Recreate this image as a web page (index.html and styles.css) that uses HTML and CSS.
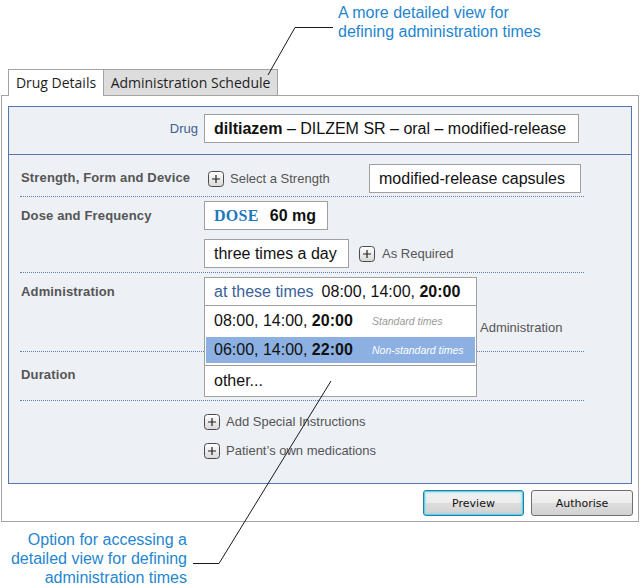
FILE: index.html
```html
<!DOCTYPE html>
<html>
<head>
<meta charset="utf-8">
<link rel="stylesheet" href="styles.css">
</head>
<body>
<div class="note note-top">A more detailed view for<br>defining administration times</div>

<div class="tabs">
  <div class="tab tab-active">Drug Details</div>
  <div class="tab tab-idle">Administration Schedule</div>
</div>

<div class="frame">
  <div class="panel">
    <div class="drug-row">
      <div class="drug-label">Drug</div>
      <div class="box drug-box"><b>diltiazem</b> – DILZEM SR – oral – modified-release</div>
    </div>

    <div class="rows">
      <div class="row row-strength">
        <div class="label">Strength, Form and Device</div>
        <div class="value">
          <span class="link link-strength"><svg class="plus" viewBox="0 0 16 16"><defs><linearGradient id="pg" x1="0" y1="0" x2="0" y2="1"><stop offset="0" stop-color="#ffffff"/><stop offset="1" stop-color="#d8d8d8"/></linearGradient></defs><rect x="0.5" y="0.5" width="15" height="15" rx="3" fill="url(#pg)" stroke="#4a4a4a"/><path d="M4 8H12M8 4V12" stroke="#222" stroke-width="1.2"/></svg>Select a Strength</span>
          <div class="box form-box">modified-release capsules</div>
        </div>
      </div>

      <div class="row row-dose">
        <div class="label">Dose and Frequency</div>
        <div class="value value-col">
          <div class="box dose-box"><span class="dose-word">DOSE</span><b>60 mg</b></div>
          <div class="freq-line">
            <div class="box freq-box">three times a day</div>
            <span class="link link-req"><svg class="plus" viewBox="0 0 16 16"><rect x="0.5" y="0.5" width="15" height="15" rx="3" fill="url(#pg)" stroke="#4a4a4a"/><path d="M4 8H12M8 4V12" stroke="#222" stroke-width="1.2"/></svg>As Required</span>
          </div>
        </div>
      </div>

      <div class="row row-admin">
        <div class="label">Administration</div>
        <div class="value value-col admin-value">
          <div class="box select-box"><span class="sel-mode">at these times</span>08:00, 14:00, <b>20:00</b></div>
          <div class="admin-extra">Administration</div>
          <div class="dropdown">
            <div class="opt"><span class="opt-times">08:00, 14:00, <b>20:00</b></span><span class="opt-note">Standard times</span></div>
            <div class="opt opt-hi"><span class="opt-times">06:00, 14:00, <b>22:00</b></span><span class="opt-note">Non-standard times</span></div>
            <div class="opt-sep"></div>
            <div class="opt opt-other">other...</div>
          </div>
        </div>
      </div>

      <div class="row row-duration">
        <div class="label">Duration</div>
        <div class="value"></div>
      </div>
    </div>

    <div class="extras">
      <span class="link"><svg class="plus" viewBox="0 0 16 16"><rect x="0.5" y="0.5" width="15" height="15" rx="3" fill="url(#pg)" stroke="#4a4a4a"/><path d="M4 8H12M8 4V12" stroke="#222" stroke-width="1.2"/></svg>Add Special Instructions</span>
      <span class="link"><svg class="plus" viewBox="0 0 16 16"><rect x="0.5" y="0.5" width="15" height="15" rx="3" fill="url(#pg)" stroke="#4a4a4a"/><path d="M4 8H12M8 4V12" stroke="#222" stroke-width="1.2"/></svg>Patient’s own medications</span>
    </div>
  </div>

  <div class="buttons">
    <button class="btn btn-default">Preview</button>
    <button class="btn">Authorise</button>
  </div>
</div>

<div class="note note-bottom">Option for accessing a<br>detailed view for defining<br>administration times</div>

<svg class="callouts" viewBox="0 0 640 588" width="640" height="588">
  <polyline points="333,27.5 295,27.5 268,75" fill="none" stroke="#1a1a1a" stroke-width="1"/>
  <polyline points="193,563.5 219,563.5 331,381" fill="none" stroke="#1a1a1a" stroke-width="1"/>
</svg>
</body>
</html>
```

FILE: styles.css
```css
html, body {
  margin: 0;
  padding: 0;
}
body {
  width: 640px;
  height: 588px;
  position: relative;
  overflow: hidden;
  background: #ffffff;
  font-family: "Liberation Sans", Arial, sans-serif;
  color: #111;
}

.note {
  color: #1f86cf;
  font-size: 16px;
  line-height: 19px;
}
.note-top {
  height: 69px;
  box-sizing: border-box;
  padding: 3px 0 0 338px;
}
.note-bottom {
  width: 187px;
  text-align: right;
  margin-top: 8px;
}

/* tabs */
.tabs {
  display: flex;
  align-items: flex-start;
  margin-left: 8px;
  height: 27px;
  margin-bottom: -1px;
  position: relative;
  z-index: 1;
}
.tab {
  box-sizing: border-box;
  border: 1px solid #a3a3a3;
  border-bottom: none;
  font-family: "Open Sans", "Noto Sans", sans-serif;
  font-size: 14px;
  color: #1e1e1e;
  text-align: center;
}
.tab-active {
  width: 96px;
  height: 27px;
  line-height: 25px;
  background: #ffffff;
}
.tab-idle {
  width: 174px;
  height: 26px;
  line-height: 25px;
  background: #dddddd;
  border-left: none;
}

/* frame */
.frame {
  margin-left: 1px;
  width: 638px;
  box-sizing: border-box;
  border: 1px solid #a3a3a3;
  padding: 10px 6px 5px 6px;
  background: #fff;
}
.panel {
  border: 1px solid #5577ad;
  background: #edf0f5;
  height: 378px;
  box-sizing: border-box;
}

.box {
  box-sizing: border-box;
  height: 29px;
  line-height: 27px;
  border: 1px solid #a0a0a0;
  background: #ffffff;
  padding-left: 9px;
  font-size: 16px;
  color: #111;
  white-space: nowrap;
}

.drug-row {
  height: 48px;
  box-sizing: border-box;
  border-bottom: 1px solid #5577ad;
  display: grid;
  grid-template-columns: 195px 375px;
  align-items: start;
  padding-top: 7px;
}
.drug-label {
  text-align: right;
  padding-right: 6px;
  font-size: 13px;
  line-height: 29px;
  color: #3f5f95;
}

/* form rows */
.rows {
  margin-left: 11px;
  width: 564px;
}
.row {
  display: grid;
  grid-template-columns: 184px 380px;
  border-bottom: 1px dotted #5b80bd;
}
.label {
  padding-left: 1px;
  font-size: 13px;
  font-weight: bold;
  color: #555;
  line-height: 29px;
  letter-spacing: 0.15px;
  white-space: nowrap;
}
.value {
  display: flex;
  align-items: center;
}
.value-col {
  flex-direction: column;
  align-items: flex-start;
}

.row-strength {
  padding: 9px 0 3px 0;
}
.row-strength .label {
  line-height: 27px;
}
.link {
  display: inline-flex;
  align-items: center;
  font-size: 13px;
  color: #555;
  white-space: nowrap;
}
.plus {
  width: 16px;
  height: 16px;
  margin-right: 6px;
  flex: none;
}
.link-strength {
  width: 161px;
  margin-left: 4px;
}
.form-box {
  width: 212px;
}

.row-dose {
  padding: 4px 0 4px 0;
}
.dose-box {
  width: 124px;
}
.dose-word {
  font-family: "Liberation Serif", "Times New Roman", serif;
  font-weight: bold;
  font-size: 16px;
  letter-spacing: 0.3px;
  color: #1d78c1;
  margin-right: 11px;
}
.freq-line {
  display: flex;
  align-items: center;
  margin-top: 9px;
}
.freq-box {
  width: 145px;
}
.link-req {
  margin-left: 10px;
}
.link-req .plus {
  margin-right: 7px;
}

.row-admin {
  padding: 4px 0 13px 0;
}
.admin-value {
  position: relative;
}
.select-box {
  width: 273px;
}
.sel-mode {
  color: #3a6299;
  margin-right: 8px;
}
.admin-extra {
  margin-top: 12px;
  height: 20px;
  line-height: 20px;
  font-size: 13px;
  color: #555;
  margin-left: 276px;
}
.dropdown {
  position: absolute;
  left: 0;
  top: 28px;
  width: 273px;
  box-sizing: border-box;
  border: 1px solid #a0a0a0;
  background: #ffffff;
  font-size: 16px;
  color: #111;
  z-index: 2;
}
.opt {
  display: flex;
  align-items: center;
  height: 29px;
  padding-left: 9px;
  white-space: nowrap;
}
.opt-times {
  width: 158px;
  flex: none;
}
.opt-note {
  font-style: italic;
  font-size: 10.5px;
  color: #9a9a9a;
}
.opt-hi {
  height: 26px;
  margin: 2px 1px;
  padding-left: 8px;
  background: #8cb0e2;
}
.opt-hi .opt-note {
  color: #ffffff;
}
.opt-sep {
  height: 1px;
  background: #9c9c9c;
}
.opt-other {
  height: 30px;
}

.row-duration {
  height: 49px;
  box-sizing: border-box;
  padding-top: 13px;
}
.row-duration .label {
  line-height: 20px;
}

.extras {
  display: flex;
  flex-direction: column;
  align-items: flex-start;
  gap: 13px;
  padding: 13px 0 0 204px;
  margin-left: -9px;
}
.extras .link {
  height: 16px;
  line-height: 16px;
}

/* buttons */
.buttons {
  display: flex;
  justify-content: flex-end;
  gap: 7px;
  margin-top: 6px;
  margin-right: -1px;
}
.btn {
  box-sizing: border-box;
  height: 26px;
  border: 1px solid #707070;
  border-radius: 3px;
  background: linear-gradient(#f3f3f3 0%, #ececec 48%, #dddddd 52%, #d2d2d2 100%);
  font-family: "DejaVu Sans", Tahoma, sans-serif;
  font-size: 11px;
  color: #111;
  padding: 0;
  width: 102px;
}
.btn-default {
  width: 101px;
  border-color: #2b7d9b;
  box-shadow: inset 0 0 0 1px #5fd0ef, inset 0 0 2px 2px rgba(120, 220, 245, 0.5);
}

.callouts {
  position: absolute;
  left: 0;
  top: 0;
  pointer-events: none;
  z-index: 5;
}
```
